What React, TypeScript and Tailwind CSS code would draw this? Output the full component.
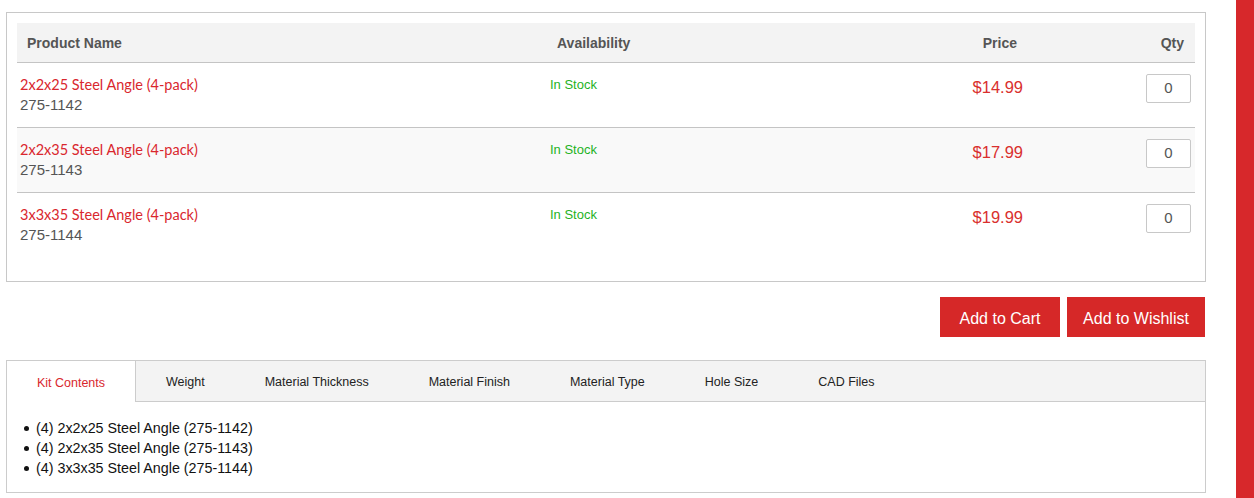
import React from "react";

const rows = [
  { name: "2x2x25 Steel Angle (4-pack)", sku: "275-1142", price: "$14.99", alt: false },
  { name: "2x2x35 Steel Angle (4-pack)", sku: "275-1143", price: "$17.99", alt: true },
  { name: "3x3x35 Steel Angle (4-pack)", sku: "275-1144", price: "$19.99", alt: false },
];

const tabs = ["Kit Contents", "Weight", "Material Thickness", "Material Finish", "Material Type", "Hole Size", "CAD Files"];

const kit = [
  "(4) 2x2x25 Steel Angle (275-1142)",
  "(4) 2x2x35 Steel Angle (275-1143)",
  "(4) 3x3x35 Steel Angle (275-1144)",
];

export default function App() {
  return (
    <div className="flex w-[1254px] h-[498px] bg-white overflow-hidden" style={{ fontFamily: "'Liberation Sans', Arial, sans-serif" }}>
      <div className="w-[1200px] ml-[6px] pt-[12px] flex flex-col">
        {/* product table box */}
        <div className="border border-[#c8c8c8] px-[10px] pt-[10px] pb-[23px]">
          <div className="flex h-[40px] pt-[2px] bg-[#f3f3f3] border-b border-[#c4c4c4] items-center text-[14px] font-bold text-[#555]">
            <div className="w-[530px] pl-[10px]">Product Name</div>
            <div className="w-[294px] pl-[10px]">Availability</div>
            <div className="w-[186px] pr-[10px] text-right">Price</div>
            <div className="flex-1 pr-[11px] text-right">Qty</div>
          </div>
          {rows.map((r, i) => (
            <div
              key={r.sku}
              className={`flex h-[65px] ${i < rows.length - 1 ? "border-b border-[#c4c4c4]" : ""} ${r.alt ? "bg-[#f9f9f9]" : "bg-white"}`}
            >
              <div className="w-[530px] pl-[3px] pt-[12px] leading-[20px]">
                <div className="text-[#d9272e] text-[14.5px]" style={{ fontFamily: "Lato, 'Open Sans', sans-serif" }}>{r.name}</div>
                <div className="text-[#555] text-[15px]">{r.sku}</div>
              </div>
              <div className="w-[294px] pl-[3px] pt-[12px] text-[13px] leading-[20px] text-[#1fb31f]">In Stock</div>
              <div className="w-[186px] pr-[4px] pt-[13px] text-right text-[16.5px] leading-[22px] text-[#d9302e]">{r.price}</div>
              <div className="flex-1 flex justify-end pr-[4px] pt-[11px]">
                <div className="w-[45px] h-[29px] border border-[#c8c8c8] rounded-[2px] flex items-center justify-center text-[15px] text-[#555] bg-white">0</div>
              </div>
            </div>
          ))}
        </div>

        {/* buttons */}
        <div className="flex justify-end gap-[7px] mt-[15px] pr-[1px]">
          <button className="w-[120px] h-[40px] pt-[3px] bg-[#d62828] text-white text-[16px]">Add to Cart</button>
          <button className="w-[138px] h-[40px] pt-[3px] bg-[#d62828] text-white text-[16px]">Add to Wishlist</button>
        </div>

        {/* tabs */}
        <div className="mt-[23px] border border-[#cccccc]">
          <div className="flex h-[41px] bg-[#f3f3f3] border-b border-[#cccccc]">
            {tabs.map((t, i) => (
              <div
                key={t}
                className={`px-[30px] pt-[3px] flex items-center whitespace-nowrap text-[12.5px] ${i === 0 ? "bg-white text-[#d9272e] border-r border-[#cccccc] h-[41px] w-[129px] justify-center" : "text-[#222]"}`}
              >
                {t}
              </div>
            ))}
          </div>
          <div className="pl-[17px] pt-[16px] pb-[14px] text-[14.3px] leading-[20px] text-[#111] flex flex-col">
            {kit.map((k) => (
              <div key={k} className="flex items-center">
                <span className="w-[5px] h-[5px] rounded-full bg-[#111] mr-[7px]" />
                <span>{k}</span>
              </div>
            ))}
          </div>
        </div>
      </div>
      <div className="flex-1" />
      <div className="w-[18px] h-[498px] bg-[#d7282b]" />
    </div>
  );
}
